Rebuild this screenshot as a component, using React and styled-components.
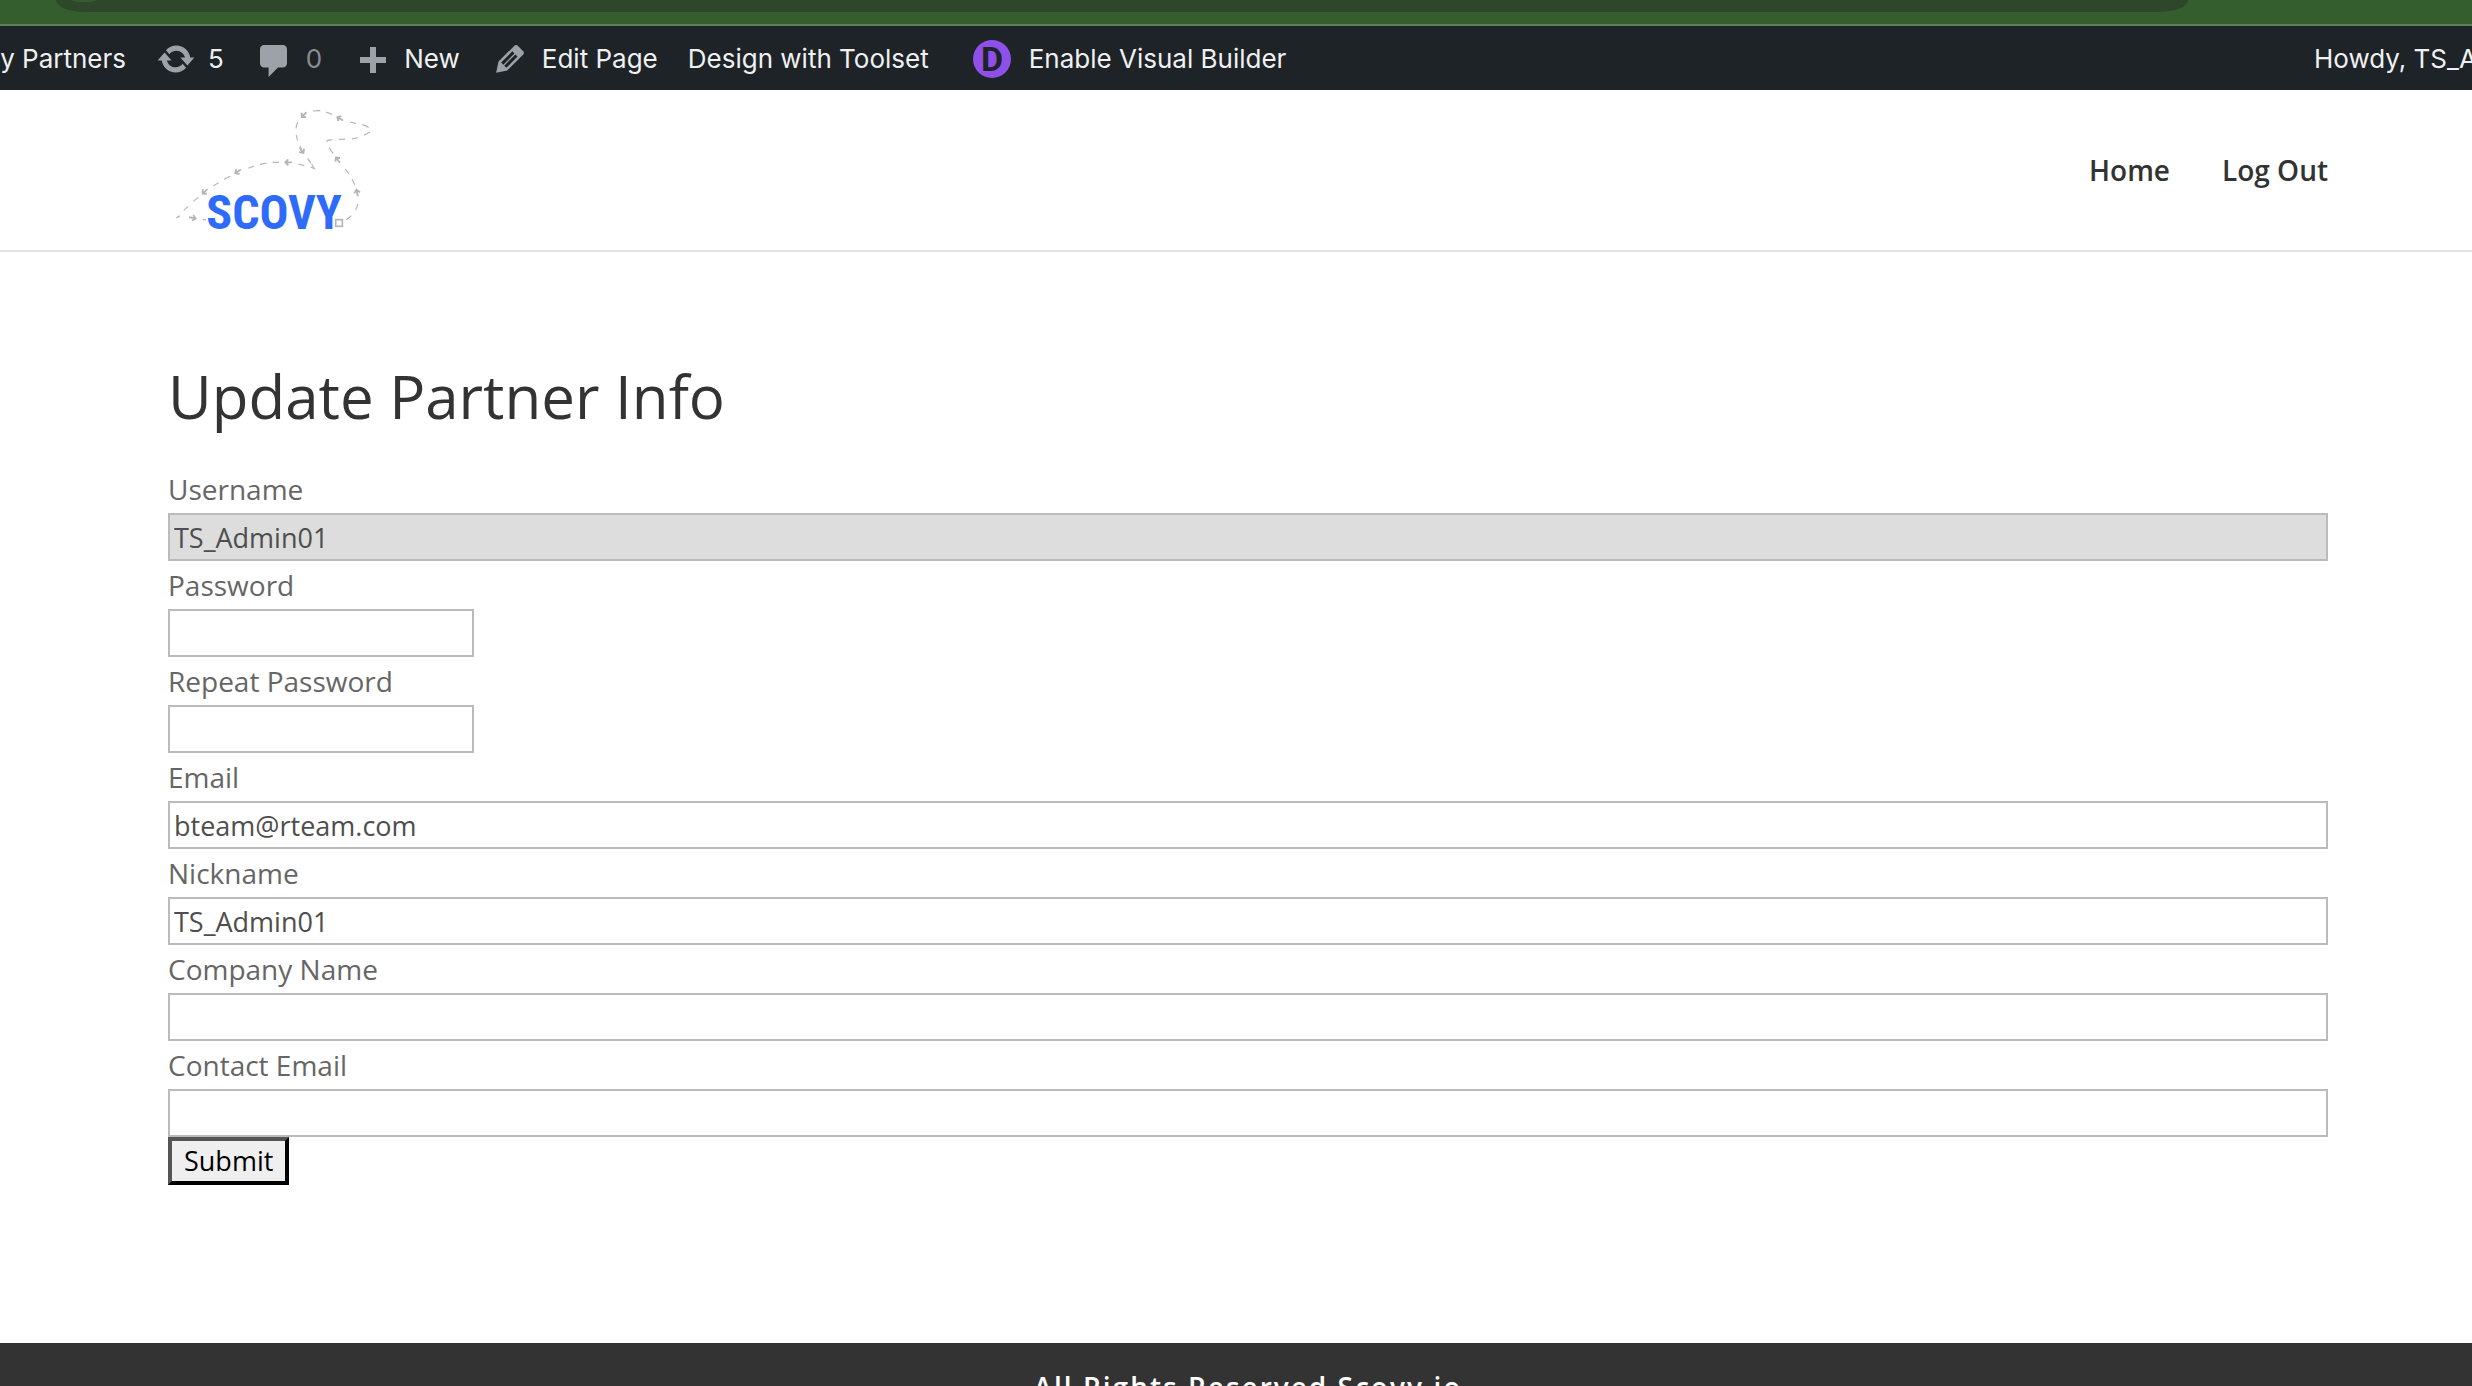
import React from 'react'
import styled, { createGlobalStyle } from 'styled-components'

const GlobalStyle = createGlobalStyle`
  * {
    box-sizing: border-box;
  }

  body {
    margin: 0;
    background: #fff;
    color: #666;
    font-family: 'Open Sans', Arial, sans-serif;
    font-size: 28px;
    line-height: 48px;
  }
`

const Page = styled.div`
  display: flex;
  flex-direction: column;
  height: 100vh;
  overflow: hidden;
`

const BrowserBar = styled.div`
  flex: none;
  height: 26px;
  padding: 0 284px 0 56px;
  overflow: hidden;
  background: #355e2f;
  border-bottom: 2px solid #5f8059;
`

const AddressBar = styled.div`
  display: flex;
  align-items: flex-end;
  height: 12px;
  padding: 0 0 10px;
  overflow: hidden;
  background: #2e472b;
  border-radius: 0 0 28px 28px / 0 0 12px 12px;
`

const SiteInfo = styled.div`
  width: 56px;
  height: 2px;
  background: #355e2f;
  clip-path: ellipse(12px 2px at 50% 0);
`

const AdminBar = styled.nav`
  display: flex;
  flex: none;
  justify-content: space-between;
  height: 64px;
  padding-top: 2px;
  overflow: hidden;
  background: #1d2327;
  font-family: Inter, sans-serif;
  font-size: 26px;
`

const AdminGroup = styled.div`
  display: flex;
  align-items: center;
  gap: 30px;
`

const AdminLink = styled.a`
  display: flex;
  align-items: center;
  gap: 12px;
  color: ${({ $muted }) => ($muted ? '#8a8e91' : '#f0f0f1')};
  text-decoration: none;
  white-space: nowrap;
`

const SiteName = styled(AdminLink)`
  justify-content: flex-end;
  width: 126px;
  overflow: hidden;
`

const Account = styled(AdminLink)`
  width: 158px;
  overflow: hidden;
`

const BuilderLink = styled(AdminLink)`
  gap: 18px;
  margin-left: 14px;
`

const Icon = styled.svg`
  width: 40px;
  height: 40px;
  fill: #9ca2a7;
`

const BuilderIcon = styled.svg`
  width: 38px;
  height: 38px;
`

const Header = styled.header`
  display: flex;
  flex: none;
  align-items: center;
  justify-content: space-between;
  height: 162px;
  padding: 0 144px 0 168px;
  border-bottom: 2px solid #e2e2e2;
`

const LogoLink = styled.a`
  display: flex;
`

const LogoImage = styled.svg`
  width: 220px;
  height: 160px;
`

const Menu = styled.nav`
  display: flex;
  gap: 52px;
`

const MenuLink = styled.a`
  color: #333;
  font-weight: 600;
  text-decoration: none;
`

const Main = styled.main`
  flex: none;
  padding: 114px 144px 158px 168px;
`

const Title = styled.h1`
  margin: 0 0 39px;
  color: #333;
  font-size: 60px;
  font-weight: 400;
  line-height: 60px;
`

const Form = styled.form`
  display: flex;
  flex-direction: column;
  align-items: flex-start;
`

const Label = styled.label`
  display: block;
`

const Input = styled.input`
  display: block;
  width: ${({ $short }) => ($short ? '306px' : '100%')};
  height: 48px;
  padding: 0 4px;
  border: 2px solid #bbb;
  border-radius: 0;
  background: #fff;
  color: #4e4e4e;
  font-family: inherit;
  font-size: 27px;

  &:disabled {
    background: #ddd;
  }
`

const Submit = styled.button`
  height: 48px;
  padding: 0 12px;
  border: 4px solid;
  border-color: #555 #000 #000 #555;
  border-radius: 0;
  background: #efefef;
  color: #000;
  font-family: inherit;
  font-size: 27px;
  line-height: 40px;
`

const Footer = styled.footer`
  flex: 1 0 auto;
  padding: 20px 0 20px 24px;
  background: #333;
  color: #fff;
  font-weight: 600;
  letter-spacing: 2px;
  text-align: center;
`

const fields = [
  { id: 'username', label: 'Username', value: 'TS_Admin01', disabled: true },
  { id: 'password', label: 'Password', type: 'password', short: true },
  { id: 'password2', label: 'Repeat Password', type: 'password', short: true },
  { id: 'email', label: 'Email', type: 'email', value: 'bteam@rteam.com' },
  { id: 'nickname', label: 'Nickname', value: 'TS_Admin01' },
  { id: 'company', label: 'Company Name' },
  { id: 'contact', label: 'Contact Email', type: 'email' },
]

// x, y and direction in degrees, 0 points left
const arrows = [
  [163, 306, -42],
  [262, 246, -35],
  [413, 217, 0],
  [456, 183, -125],
  [460, 76, -45],
  [568, 85, 30],
  [562, 208, 52],
  [621, 306, 80],
  [130, 384, 190],
]

const Logo = () => (
  <LogoImage viewBox="54 0 660 480" role="img" aria-label="Scovy">
    <g fill="none" stroke="#b5b5b5" strokeWidth="3.5">
      <path d="M78 384l11-7-4 5M101 361l13-12M130 334l15-12M190 287l16-9M222 268l18-9M295 235l17-7M330 223l20-4M368 217h19M445 222l18 5" />
      <path d="M482 231l11 5-8-13M483 220l-10-15M450 168l4 8M443 152q-3-9-4-17M438 115q1-9 5-18M489 63q11-2 22-1M528 66l18 7M600 96l18 4M637 104q12 3 19 9M660 126l-18 10M623 143l-17 4M585 148h-18M547 149q-14 0-18 6" />
      <path d="M537 173l12 17M586 237l11 15M606 268l8 16M623 342q-1 9-6 18M604 377q-7 8-16 12M168 389h-10" />
      {arrows.map(([x, y, angle]) => (
        <path
          key={`${x}-${y}`}
          d="M13 0H-6M2-9L-7 0L2 9"
          strokeWidth="5.5"
          transform={`translate(${x} ${y}) rotate(${angle})`}
        />
      ))}
      <rect x="557" y="389" width="20" height="20" strokeWidth="5" />
    </g>
    <text
      x="372"
      y="418"
      textAnchor="middle"
      fill="#2e6bfa"
      fontFamily="'Roboto Condensed', 'Liberation Sans Narrow', sans-serif"
      fontSize="144"
      fontWeight="700"
    >
      SCOVY
    </text>
  </LogoImage>
)

const App = () => (
  <>
    <GlobalStyle />
    <Page>
      <BrowserBar>
        <AddressBar>
          <SiteInfo />
        </AddressBar>
      </BrowserBar>

      <AdminBar aria-label="Toolbar">
        <AdminGroup>
          <SiteName href="#site">Scovy Partners</SiteName>
          <AdminLink href="#updates">
            <Icon viewBox="0 0 20 20" aria-hidden="true">
              <path d="M10.2 3.28c3.53 0 6.43 2.61 6.92 6h2.08l-3.5 4-3.5-4h2.32c-.45-1.97-2.21-3.45-4.32-3.45-1.45 0-2.73.71-3.54 1.78L4.95 5.66C6.23 4.2 8.11 3.28 10.2 3.28zm-.4 13.44c-3.52 0-6.43-2.61-6.92-6H.8l3.5-4c1.17 1.33 2.33 2.67 3.5 4H5.48c.45 1.97 2.21 3.45 4.32 3.45 1.45 0 2.73-.71 3.54-1.78l1.71 1.95c-1.28 1.46-3.15 2.38-5.25 2.38z" />
            </Icon>
            5
          </AdminLink>
          <AdminLink href="#comments" $muted>
            <Icon viewBox="0 0 20 20" aria-hidden="true">
              <path d="M5 3h9.500c1.100 0 2 .9 2 2v7.200c0 1.100-.9 2-2 2h-2.500L7.300 19v-4.800H5c-1.100 0-2-.9-2-2V5c0-1.100.9-2 2-2z" />
            </Icon>
            0
          </AdminLink>
          <AdminLink href="#new">
            <Icon viewBox="0 0 20 20" aria-hidden="true">
              <path d="M17 9v3h-5v5H9v-5H4V9h5V4h3v5h5z" />
            </Icon>
            New
          </AdminLink>
          <AdminLink href="#edit">
            <Icon viewBox="0 0 20 20" aria-hidden="true">
              <path d="M13.89 3.39l2.71 2.72c.46.46.42 1.24.03 1.64l-8.01 8.02-5.56 1.16 1.16-5.58s7.600-7.630 7.990-8.030c.39-.39 1.220-.39 1.680.07zm-2.730 2.790l-5.590 5.610 1.110 1.110 5.540-5.650zm-2.970 8.230l5.580-5.600-1.070-1.080-5.590 5.600z" />
            </Icon>
            Edit Page
          </AdminLink>
          <AdminLink href="#toolset">Design with Toolset</AdminLink>
          <BuilderLink href="#builder">
            <BuilderIcon viewBox="0 0 38 38" aria-hidden="true">
              <circle cx="19" cy="19" r="19" fill="#8f50ea" />
              <text
                x="19"
                y="31"
                textAnchor="middle"
                fill="#1d2327"
                fontFamily="Roboto, sans-serif"
                fontSize="34"
                fontWeight="700"
              >
                D
              </text>
            </BuilderIcon>
            Enable Visual Builder
          </BuilderLink>
        </AdminGroup>
        <Account href="#account">Howdy, TS_Admin01</Account>
      </AdminBar>

      <Header>
        <LogoLink href="#home">
          <Logo />
        </LogoLink>
        <Menu>
          <MenuLink href="#home">Home</MenuLink>
          <MenuLink href="#logout">Log Out</MenuLink>
        </Menu>
      </Header>

      <Main>
        <Title>Update Partner Info</Title>
        <Form>
          {fields.map(({ id, label, type, value, short, disabled }) => (
            <React.Fragment key={id}>
              <Label htmlFor={id}>{label}</Label>
              <Input
                id={id}
                type={type || 'text'}
                defaultValue={value}
                disabled={disabled}
                $short={short}
              />
            </React.Fragment>
          ))}
          <Submit type="button">Submit</Submit>
        </Form>
      </Main>

      <Footer>All Rights Reserved Scovy.io</Footer>
    </Page>
  </>
)

export default App
